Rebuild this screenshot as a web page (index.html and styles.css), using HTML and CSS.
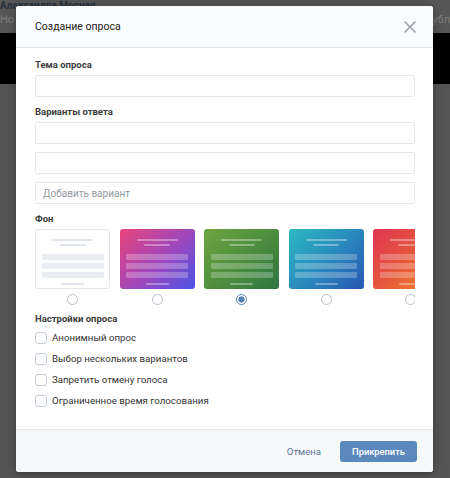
FILE: index.html
```html
<!DOCTYPE html>
<html lang="ru">
<head>
<meta charset="utf-8"/>
<meta content="width=device-width, initial-scale=1.0" name="viewport"/>
<title>Создание опроса</title>
<link rel="stylesheet" href="styles.css">
</head>
<body>
<div class="page">
  <div class="page-top">
    <div class="page-name">Александра Мосная</div>
    <div class="page-row">
      <span>Но</span>
      <span>Публ</span>
    </div>
  </div>
  <div class="page-bar"></div>
</div>

<div class="modal">
  <div class="modal-head">
    <span class="modal-title">Создание опроса</span>
    <svg class="close" width="12" height="12" viewBox="0 0 12 12">
      <path d="M1 1L11 11M11 1L1 11" stroke="#99a2ad" stroke-width="1.6" stroke-linecap="round"/>
    </svg>
  </div>

  <div class="modal-body">
    <div class="label">Тема опроса</div>
    <input class="field" type="text"/>

    <div class="label">Варианты ответа</div>
    <div class="fields">
      <input class="field" type="text"/>
      <input class="field" type="text"/>
      <input class="field" type="text" placeholder="Добавить вариант"/>
    </div>

    <div class="label">Фон</div>
    <div class="bgs">
      <div class="bg-item">
        <div class="card card-white">
          <i class="ln1"></i><i class="ln2"></i>
          <i class="bar first"></i><i class="bar"></i><i class="bar"></i>
          <i class="ln3"></i>
        </div>
        <span class="radio"></span>
      </div>
      <div class="bg-item">
        <div class="card card-pink">
          <i class="ln1"></i><i class="ln2"></i>
          <i class="bar first"></i><i class="bar"></i><i class="bar"></i>
          <i class="ln3"></i>
        </div>
        <span class="radio"></span>
      </div>
      <div class="bg-item">
        <div class="card card-green">
          <i class="ln1"></i><i class="ln2"></i>
          <i class="bar first"></i><i class="bar"></i><i class="bar"></i>
          <i class="ln3"></i>
        </div>
        <span class="radio on"></span>
      </div>
      <div class="bg-item">
        <div class="card card-blue">
          <i class="ln1"></i><i class="ln2"></i>
          <i class="bar first"></i><i class="bar"></i><i class="bar"></i>
          <i class="ln3"></i>
        </div>
        <span class="radio"></span>
      </div>
      <div class="bg-item">
        <div class="card card-red">
          <i class="ln1"></i><i class="ln2"></i>
          <i class="bar first"></i><i class="bar"></i><i class="bar"></i>
          <i class="ln3"></i>
        </div>
        <span class="radio"></span>
      </div>
    </div>

    <div class="label label-settings">Настройки опроса</div>
    <label class="check"><span class="box"></span>Анонимный опрос</label>
    <label class="check"><span class="box"></span>Выбор нескольких вариантов</label>
    <label class="check"><span class="box"></span>Запретить отмену голоса</label>
    <label class="check"><span class="box"></span>Ограниченное время голосования</label>
  </div>

  <div class="modal-foot">
    <button class="btn-cancel">Отмена</button>
    <button class="btn-main">Прикрепить</button>
  </div>
</div>
</body>
</html>
```

FILE: styles.css
```css
body {
  margin: 0;
  background: #555;
  font-family: Roboto, "Open Sans", sans-serif;
  height: 478px;
  overflow: hidden;
}
.page-top {
  height: 33px;
  background: #565656;
  overflow: hidden;
}
.page-name {
  font-size: 10px;
  font-weight: bold;
  color: #27313c;
  line-height: 11px;
}
.page-row {
  display: flex;
  justify-content: space-between;
  font-size: 11px;
  color: #7c7c7c;
  line-height: 13px;
  margin-top: 2px;
}
.page-bar {
  height: 51px;
  background: #000;
}

.modal {
  position: absolute;
  top: 6px;
  left: 16px;
  width: 417px;
  height: 466px;
  background: #fff;
  border-radius: 3px;
  box-shadow: 0 2px 10px rgba(0,0,0,0.35);
  display: flex;
  flex-direction: column;
  overflow: hidden;
}
.modal-head {
  height: 41px;
  background: #fafbfc;
  border-bottom: 1px solid #e7e8ec;
  display: flex;
  align-items: center;
  justify-content: space-between;
  padding: 0 17px 0 19px;
  flex-shrink: 0;
}
.modal-title {
  font-size: 10.5px;
  color: #222;
}
.modal-body {
  flex: 1;
  padding: 10px 18px 0 19px;
}
.label {
  font-size: 9.5px;
  font-weight: bold;
  color: #3d3d3d;
  line-height: 14px;
  margin-bottom: 3px;
}
.label + .field, .fields {
  margin-bottom: 8px;
}
.fields {
  display: flex;
  flex-direction: column;
  gap: 8px;
}
.field {
  display: block;
  width: 100%;
  box-sizing: border-box;
  height: 22px;
  margin: 0;
  border: 1px solid #e6e8eb;
  border-radius: 2px;
  padding: 0 7px;
  font-family: inherit;
  font-size: 10px;
  color: #222;
  background: #fff;
}
.field::placeholder {
  color: #929aa3;
}

.bgs {
  display: flex;
  gap: 9.5px;
  overflow: hidden;
  margin-bottom: 7px;
}
.bg-item {
  flex: 0 0 75px;
  display: flex;
  flex-direction: column;
  align-items: center;
}
.card {
  width: 75px;
  height: 60px;
  box-sizing: border-box;
  border-radius: 3px;
  padding-top: 10px;
  display: flex;
  flex-direction: column;
  align-items: center;
}
.card i {
  display: block;
  background: rgba(255,255,255,0.35);
  border-radius: 1px;
}
.card .ln1 { width: 41px; height: 2px; }
.card .ln2 { width: 26px; height: 2px; margin-top: 3px; }
.card .bar { width: 62px; height: 6px; margin-top: 3px; background: rgba(255,255,255,0.25); }
.card .bar.first { margin-top: 8px; }
.card .ln3 { width: 23px; height: 2px; margin-top: 5px; }

.card-white {
  border: 1px solid #e4e7eb;
  padding-top: 9px;
}
.card-white i { background: #e0e5eb; }
.card-white .bar { background: #e9edf2; width: 62px; }
.card-pink { background: linear-gradient(135deg, #e8447b 0%, #9d47bd 55%, #4b55e6 100%); }
.card-green { background: linear-gradient(135deg, #6ea43f 0%, #4b8c3e 55%, #2e7640 100%); }
.card-blue { background: linear-gradient(135deg, #2cb9c1 0%, #2a8bbd 50%, #2756b2 100%); }
.card-red { background: linear-gradient(135deg, #df3452 0%, #e65a3c 50%, #f3922a 100%); }

.radio {
  display: block;
  width: 11px;
  height: 11px;
  margin-top: 5px;
  border: 1px solid #b7c0ca;
  border-radius: 50%;
  box-sizing: border-box;
  background: #fff;
}
.radio.on {
  border-color: #5181b8;
  background: radial-gradient(circle, #5181b8 0 2.8px, #fff 3.4px);
}

.label-settings {
  margin-bottom: 1px;
}
.check {
  display: flex;
  align-items: center;
  height: 21px;
  font-size: 9.7px;
  color: #333;
}
.box {
  width: 12px;
  height: 12px;
  box-sizing: border-box;
  border: 1px solid #c5ced8;
  border-radius: 3px;
  margin-right: 5px;
  background: #fff;
}

.modal-foot {
  height: 42px;
  background: #f7f8fa;
  border-top: 1px solid #e7e8ec;
  display: flex;
  align-items: center;
  justify-content: flex-end;
  padding-right: 16px;
  flex-shrink: 0;
}
button {
  font-family: inherit;
  border: none;
  cursor: pointer;
}
.btn-cancel {
  background: none;
  color: #5b7797;
  font-size: 9.6px;
  padding: 0;
  margin-right: 19px;
}
.btn-main {
  width: 77px;
  height: 21px;
  background: #5c89bd;
  color: #fff;
  font-size: 9.3px;
  font-weight: 500;
  border-radius: 3px;
}
```
